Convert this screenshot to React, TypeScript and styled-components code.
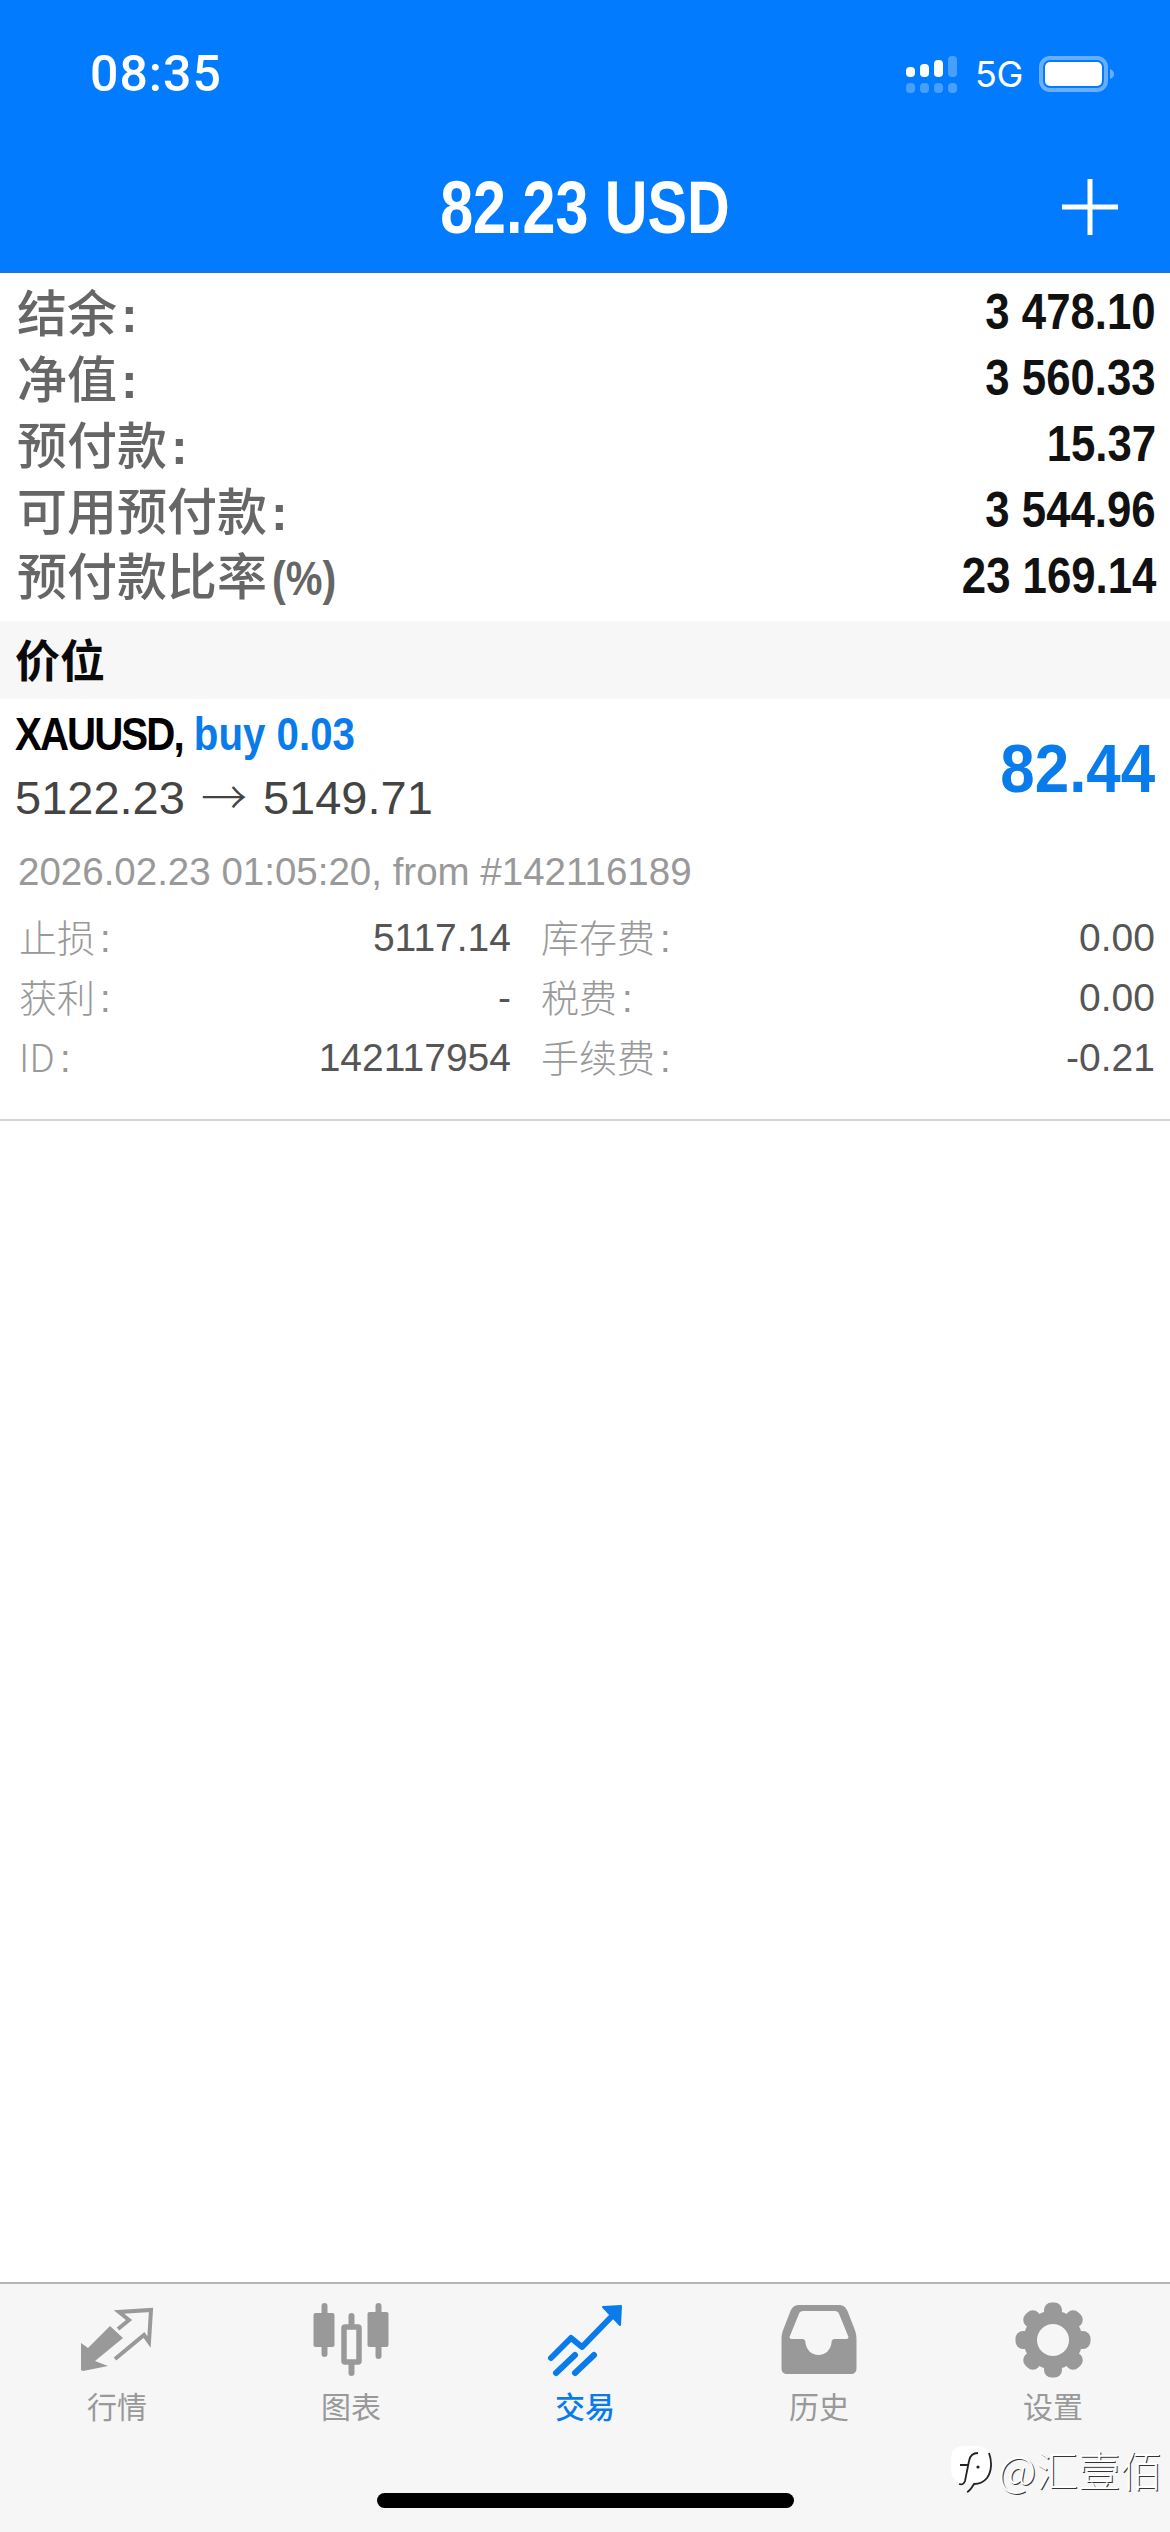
import React from "react";
import styled, { createGlobalStyle } from "styled-components";

const GlobalStyle = createGlobalStyle`
  html, body {
    margin: 0;
    padding: 0;
    background: #fff;
  }
  * {
    box-sizing: border-box;
  }
`;

const SANS = `"Liberation Sans", "Noto Sans CJK SC", sans-serif`;
const BLUE = "#0a7bea";

const Screen = styled.div`
  position: relative;
  width: 1170px;
  height: 2532px;
  display: flex;
  flex-direction: column;
  overflow: hidden;
  font-family: ${SANS};
  background: #fff;
`;

const Header = styled.header`
  height: 273px;
  flex-shrink: 0;
  background: #037bfe;
  border-bottom: 2px solid #1a74e0;
  color: #fff;
`;

const StatusBar = styled.div`
  height: 152px;
  padding: 44px 55px 0 90px;
  display: flex;
  justify-content: space-between;
  align-items: flex-start;
`;

const Clock = styled.span`
  font-family: Roboto, sans-serif;
  font-size: 50px;
  line-height: 60px;
  font-weight: 500;
  letter-spacing: 1px;
`;

const StatusIcons = styled.div`
  display: flex;
  align-items: center;
  gap: 18px;
  height: 60px;
`;

const NetworkLabel = styled.span`
  font-family: Inter, sans-serif;
  font-size: 36px;
  line-height: 60px;
  width: 46px;
  letter-spacing: -0.5px;
`;

const TitleBar = styled.div`
  height: 120px;
  padding-right: 52px;
  display: flex;
  align-items: flex-start;
  justify-content: flex-end;
  position: relative;
`;

const Title = styled.h1`
  position: absolute;
  left: 0;
  right: 0;
  top: 14px;
  margin: 0;
  text-align: center;
  font-size: 74px;
  line-height: 84px;
  font-weight: 700;
  transform: scaleX(0.8);
`;

const AddButton = styled.svg`
  width: 56px;
  height: 56px;
  margin-top: 27px;
`;

const Summary = styled.section`
  padding: 6px 14px 12px 17px;
`;

const SummaryRow = styled.div`
  height: 66px;
  display: flex;
  align-items: center;
  justify-content: space-between;
`;

const SummaryLabel = styled.span`
  font-size: 50px;
  line-height: 66px;
  font-weight: 500;
  color: #666;
  font-family: "Noto Sans CJK SC", sans-serif;
  white-space: nowrap;
`;

const Colon = styled.span`
  font-family: "Liberation Sans", sans-serif;
  font-weight: 700;
  margin-left: 4px;
`;

const Percent = styled.span`
  font-family: "Liberation Sans", sans-serif;
  font-weight: 700;
  font-size: 48px;
  margin-left: 5px;
  display: inline-block;
  transform: scaleX(0.86);
  transform-origin: left center;
`;

const SummaryValue = styled.span`
  font-size: 50px;
  line-height: 66px;
  font-weight: 700;
  color: #111;
  transform: scaleX(0.875);
  transform-origin: right center;
`;

const SectionHead = styled.div`
  height: 78px;
  padding: 0 0 4px 15px;
  display: flex;
  align-items: center;
  background: #f7f7f7;
  font-size: 45px;
  font-weight: 700;
  color: #0a0a0a;
`;

const Position = styled.section`
  height: 422px;
  border-bottom: 2px solid #d5d5d5;
  display: flex;
  flex-direction: column;
`;

const PositionTop = styled.div`
  height: 136px;
  padding: 0 15px;
  display: flex;
  justify-content: space-between;
  align-items: center;
`;

const Deal = styled.div`
  display: flex;
  flex-direction: column;
`;

const DealTitle = styled.div`
  font-size: 46px;
  line-height: 58px;
  font-weight: 700;
  color: #000;
  white-space: nowrap;
  transform: scaleX(0.875);
  transform-origin: left center;
`;

const DealSymbol = styled.span`
  letter-spacing: -2.2px;
`;

const DealSide = styled.span`
  color: ${BLUE};
`;

const DealPrices = styled.div`
  font-size: 47px;
  line-height: 62px;
  color: #444;
  white-space: nowrap;
`;

const PriceArrow = styled.span`
  font-family: "Noto Sans CJK SC", sans-serif;
  font-size: 46px;
  font-weight: 300;
  margin: 0 16px;
`;

const Profit = styled.div`
  font-size: 68px;
  font-weight: 700;
  color: ${BLUE};
  transform: scaleX(0.91);
  transform-origin: right center;
  margin-top: 2px;
`;

const OpenTime = styled.div`
  padding: 12px 18px 0;
  font-size: 38.5px;
  line-height: 50px;
  color: #999;
  white-space: nowrap;
`;

const DetailGrid = styled.div`
  margin-top: 11px;
  padding: 0 15px 0 19px;
  display: grid;
  grid-template-columns: 492px 1fr;
  column-gap: 30px;
  grid-auto-rows: 60px;
`;

const Detail = styled.div`
  display: flex;
  align-items: center;
  justify-content: space-between;
`;

const DetailLabel = styled.span`
  font-family: "Noto Sans CJK SC", sans-serif;
  font-size: 38px;
  font-weight: 300;
  color: #999;
  margin-bottom: 6px;
`;

const DetailColon = styled.span`
  font-family: "Liberation Sans", sans-serif;
  margin-left: 5px;
`;

const DetailValue = styled.span`
  font-size: 39px;
  color: #555;
`;

const Spacer = styled.div`
  flex: 1;
`;

const TabBar = styled.nav`
  height: 250px;
  flex-shrink: 0;
  background: #f6f6f6;
  border-top: 2px solid #b5b5b5;
  display: grid;
  grid-template-columns: repeat(5, 234px);
  padding-top: 18px;
`;

const Tab = styled.div<{ $active?: boolean }>`
  display: flex;
  flex-direction: column;
  align-items: center;
  color: ${(p) => (p.$active ? BLUE : "#999")};
`;

const TabIcon = styled.svg`
  height: 76px;
  width: 80px;
  display: block;
`;

const TabLabel = styled.span<{ $active?: boolean }>`
  margin-top: 9px;
  font-family: "Noto Sans CJK SC", sans-serif;
  font-size: 30px;
  line-height: 36px;
  font-weight: ${(p) => (p.$active ? 500 : 400)};
`;

const HomeBar = styled.div`
  position: absolute;
  left: 377px;
  bottom: 24px;
  width: 417px;
  height: 15px;
  border-radius: 8px;
  background: #000;
`;

const Watermark = styled.div`
  position: absolute;
  left: 950px;
  top: 2445px;
  display: flex;
  align-items: center;
  gap: 6px;
  color: #fff;
`;

const WatermarkText = styled.span`
  font-family: "Noto Sans CJK SC", sans-serif;
  font-size: 42px;
  line-height: 48px;
  font-weight: 300;
  text-shadow: 1px 1px 0 #333;
  white-space: nowrap;
`;

const SignalIcon = () => (
  <svg width="51" height="37" viewBox="0 0 51 37">
    <g fill="#fff">
      <rect x="0" y="11" width="9" height="10" rx="4" />
      <rect x="14" y="8" width="9" height="13" rx="4" />
      <rect x="28" y="4" width="9" height="17" rx="4" />
    </g>
    <g fill="#fff" fillOpacity="0.28">
      <rect x="42" y="0" width="9" height="21" rx="4" />
      <rect x="0" y="27" width="9" height="10" rx="4" />
      <rect x="14" y="27" width="9" height="10" rx="4" />
      <rect x="28" y="27" width="9" height="10" rx="4" />
      <rect x="42" y="27" width="9" height="10" rx="4" />
    </g>
  </svg>
);

const BatteryIcon = () => (
  <svg width="76" height="36" viewBox="0 0 76 36">
    <rect x="2" y="2" width="65" height="32" rx="9" fill="none" stroke="#fff" strokeOpacity="0.4" strokeWidth="4" />
    <rect x="6" y="6" width="57" height="24" rx="5" fill="#fff" />
    <path d="M71 13 C74 14 75 16 75 18 C75 20 74 22 71 23 Z" fill="#fff" fillOpacity="0.4" />
  </svg>
);

const QuotesIcon = () => (
  <TabIcon viewBox="-4 -6 80 76">
    <path d="M0 62 L0 35 L7 40 L29 18 L42 30 L14 53 L27 58 L2 63 Z" fill="currentColor" strokeLinejoin="round" />
    <path
      d="M34 51 L63 27 L68 34 L70 2 L38 4 L48 12 L37 21"
      fill="none"
      stroke="currentColor"
      strokeWidth="4"
    />
  </TabIcon>
);

const ChartIcon = () => (
  <TabIcon viewBox="-2.5 -1 80 76">
    <g fill="currentColor">
      <rect x="8" y="0" width="6" height="54" rx="3" />
      <rect x="0" y="10" width="21" height="34" rx="2" />
      <rect x="35" y="10" width="6" height="63" rx="3" />
      <rect x="62" y="0" width="6" height="56" rx="3" />
      <rect x="54" y="9" width="21" height="35" rx="2" />
    </g>
    <rect x="30.5" y="24" width="15" height="35" rx="1" fill="#f6f6f6" stroke="currentColor" strokeWidth="5.5" />
  </TabIcon>
);

const TradeIcon = () => (
  <TabIcon viewBox="-3 -4 80 76">
    <g fill="none" stroke="currentColor" strokeWidth="6" strokeLinecap="round" strokeLinejoin="round">
      <path d="M3 52 L23 32 L34 41 L68 6" />
      <path d="M8 67 L27 49" />
      <path d="M27 67 L46 49" />
    </g>
    <path d="M55 1 L73 0 L72 19 Z" fill="currentColor" stroke="currentColor" strokeWidth="2" strokeLinejoin="round" />
  </TabIcon>
);

const HistoryIcon = () => (
  <TabIcon viewBox="-2.5 -3 80 76">
    <path
      fillRule="evenodd"
      fill="currentColor"
      d="M18 0 L57 0 C62 0 64 2 66 6 L73 24 C74.500 28 75 31 75 34 L75 63 C75 67 73 69 69 69 L6 69 C2 69 0 67 0 63 L0 34 C0 31 .5 28 2 24 L9 6 C11 2 13 0 18 0 Z
         M22 6 C19 6 18 7 17 10 L8 32 C8 33 9 34 10 34 L20 34 C23 34 24 35 24 38 C25 45 30 50 37 50 C44 50 49 45 50 38 C50 35 51 34 54 34 L65 34 C66 34 67 33 67 32 L58 10 C57 7 56 6 53 6 Z"
    />
  </TabIcon>
);

const gearTeeth = [0, 45, 90, 135, 180, 225, 270, 315];

const SettingsIcon = () => (
  <TabIcon viewBox="-40 -38 80 76">
    <circle r="29.500" fill="currentColor" />
    {gearTeeth.map((deg) => (
      <rect key={deg} x="-9" y="-37.500" width="18" height="16" rx="7.500" fill="currentColor" transform={`rotate(${deg})`} />
    ))}
    <circle r="16" fill="#f6f6f6" />
  </TabIcon>
);

const WatermarkLogo = () => (
  <svg width="42" height="48" viewBox="0 0 42 48">
    <path d="M14 1 L26 1 C36 1 41 7 41 17 L41 24 C41 33 36 38 28 39 L12 38 C5 37 1 32 1 24 L1 14 C1 6 6 1 14 1 Z" fill="#fff" />
    <path
      d="M39 8 C42 16 42 26 37 33 C33 38 28 39 24 39 C22 42 20 46 17 47 M28 8 C23 8 20 10 19 16 L15 36 C14 39 12 40 9 39 M10 20 L18 20"
      fill="none"
      stroke="#222"
      strokeWidth="1.800"
    />
    <circle cx="28" cy="22" r="1.600" fill="#222" />
  </svg>
);

const summary = [
  { label: "结余", value: "3 478.10" },
  { label: "净值", value: "3 560.33" },
  { label: "预付款", value: "15.37" },
  { label: "可用预付款", value: "3 544.96" },
  { label: "预付款比率", suffix: "(%)", value: "23 169.14" },
];

const details = [
  { label: "止损", value: "5117.14" },
  { label: "库存费", value: "0.00" },
  { label: "获利", value: "-" },
  { label: "税费", value: "0.00" },
  { label: "ID", value: "142117954" },
  { label: "手续费", value: "-0.21" },
];

const tabs = [
  { label: "行情", icon: <QuotesIcon /> },
  { label: "图表", icon: <ChartIcon /> },
  { label: "交易", icon: <TradeIcon />, active: true },
  { label: "历史", icon: <HistoryIcon /> },
  { label: "设置", icon: <SettingsIcon /> },
];

export default function App() {
  return (
    <Screen>
      <GlobalStyle />
      <Header>
        <StatusBar>
          <Clock>08:35</Clock>
          <StatusIcons>
            <SignalIcon />
            <NetworkLabel>5G</NetworkLabel>
            <BatteryIcon />
          </StatusIcons>
        </StatusBar>
        <TitleBar>
          <Title>82.23 USD</Title>
          <AddButton viewBox="0 0 56 56">
            <path d="M28 0 V56 M0 28 H56" stroke="#fff" strokeWidth="5" fill="none" />
          </AddButton>
        </TitleBar>
      </Header>

      <Summary>
        {summary.map((row) => (
          <SummaryRow key={row.label}>
            <SummaryLabel>
              {row.label}
              {row.suffix && <Percent>{row.suffix}</Percent>}
              {!row.suffix && <Colon>:</Colon>}
            </SummaryLabel>
            <SummaryValue>{row.value}</SummaryValue>
          </SummaryRow>
        ))}
      </Summary>

      <SectionHead>价位</SectionHead>

      <Position>
        <PositionTop>
          <Deal>
            <DealTitle>
              <DealSymbol>XAUUSD,</DealSymbol> <DealSide>buy 0.03</DealSide>
            </DealTitle>
            <DealPrices>
              5122.23<PriceArrow>→</PriceArrow>5149.71
            </DealPrices>
          </Deal>
          <Profit>82.44</Profit>
        </PositionTop>
        <OpenTime>2026.02.23 01:05:20, from #142116189</OpenTime>
        <DetailGrid>
          {details.map((d) => (
            <Detail key={d.label}>
              <DetailLabel>
                {d.label}
                <DetailColon>:</DetailColon>
              </DetailLabel>
              <DetailValue>{d.value}</DetailValue>
            </Detail>
          ))}
        </DetailGrid>
      </Position>

      <Spacer />

      <TabBar>
        {tabs.map((t) => (
          <Tab key={t.label} $active={t.active}>
            {t.icon}
            <TabLabel $active={t.active}>{t.label}</TabLabel>
          </Tab>
        ))}
      </TabBar>

      <HomeBar />
      <Watermark>
        <WatermarkLogo />
        <WatermarkText>@汇壹佰</WatermarkText>
      </Watermark>
    </Screen>
  );
}
